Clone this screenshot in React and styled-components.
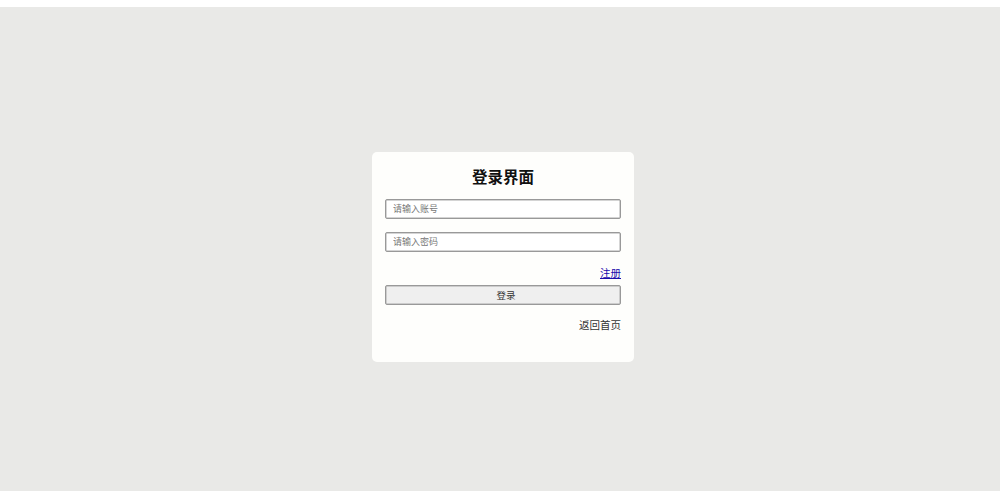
import React from 'react'
import styled, { createGlobalStyle } from 'styled-components'

const GlobalStyle = createGlobalStyle`
    html, body {
        margin: 0;
        padding: 0;
        background: #ffffff;
    }
    body {
        font-family: "Liberation Sans", "Noto Sans CJK SC", sans-serif;
    }
`

const Page = styled.div`
    margin-top: 7px;
    height: 484px;
    background-color: #e9e9e7;
    display: flex;
    justify-content: center;
    align-items: flex-start;
    padding-top: 145px;
    box-sizing: border-box;
`

const Card = styled.div`
    width: 262px;
    height: 210px;
    margin-left: 6px;
    box-sizing: border-box;
    padding: 14px 13px 0;
    background-color: #fefefc;
    border-radius: 5px;
    display: flex;
    flex-direction: column;
`

const Title = styled.h2`
    margin: 0 0 9px;
    font-size: 15.5px;
    line-height: 24px;
    font-weight: 700;
    color: #111;
    text-align: center;
`

const Input = styled.input`
    display: block;
    width: 100%;
    height: 20px;
    box-sizing: border-box;
    margin-bottom: ${p => p.$gap || 0}px;
    padding: 0 7px;
    border: 1px solid #999;
    box-shadow: inset 0 0 0 0.5px #aaa;
    border-radius: 2px;
    background: #fff;
    font-size: 9px;
    font-family: inherit;
    color: #333;

    &::placeholder {
        color: #777;
    }
`

const LinkRow = styled.div`
    display: flex;
    justify-content: flex-end;
    margin: ${p => p.$top}px 0 ${p => p.$bottom}px;
    font-size: 10.5px;
    line-height: 16px;
`

const RegisterLink = styled.a`
    color: #1a0dab;
    text-decoration: underline;
`

const BackLink = styled.span`
    color: #333;
`

const Button = styled.button`
    display: block;
    width: 100%;
    height: 20px;
    box-sizing: border-box;
    border: 1px solid #999;
    box-shadow: inset 0 0 0 0.5px #aaa;
    border-radius: 2px;
    background-color: #efefef;
    font-size: 9.5px;
    line-height: 16px;
    font-family: inherit;
    color: #333;
    padding: 1px 0 0 6px;
`

const App = () => {
    return (
        <>
            <GlobalStyle />
            <Page>
                <Card>
                    <Title>登录界面</Title>
                    <Input type="text" placeholder="请输入账号" $gap={13} />
                    <Input type="password" placeholder="请输入密码" />
                    <LinkRow $top={13} $bottom={4}>
                        <RegisterLink href="#">注册</RegisterLink>
                    </LinkRow>
                    <Button>登录</Button>
                    <LinkRow $top={12} $bottom={0}>
                        <BackLink>返回首页</BackLink>
                    </LinkRow>
                </Card>
            </Page>
        </>
    )
}

export default App
